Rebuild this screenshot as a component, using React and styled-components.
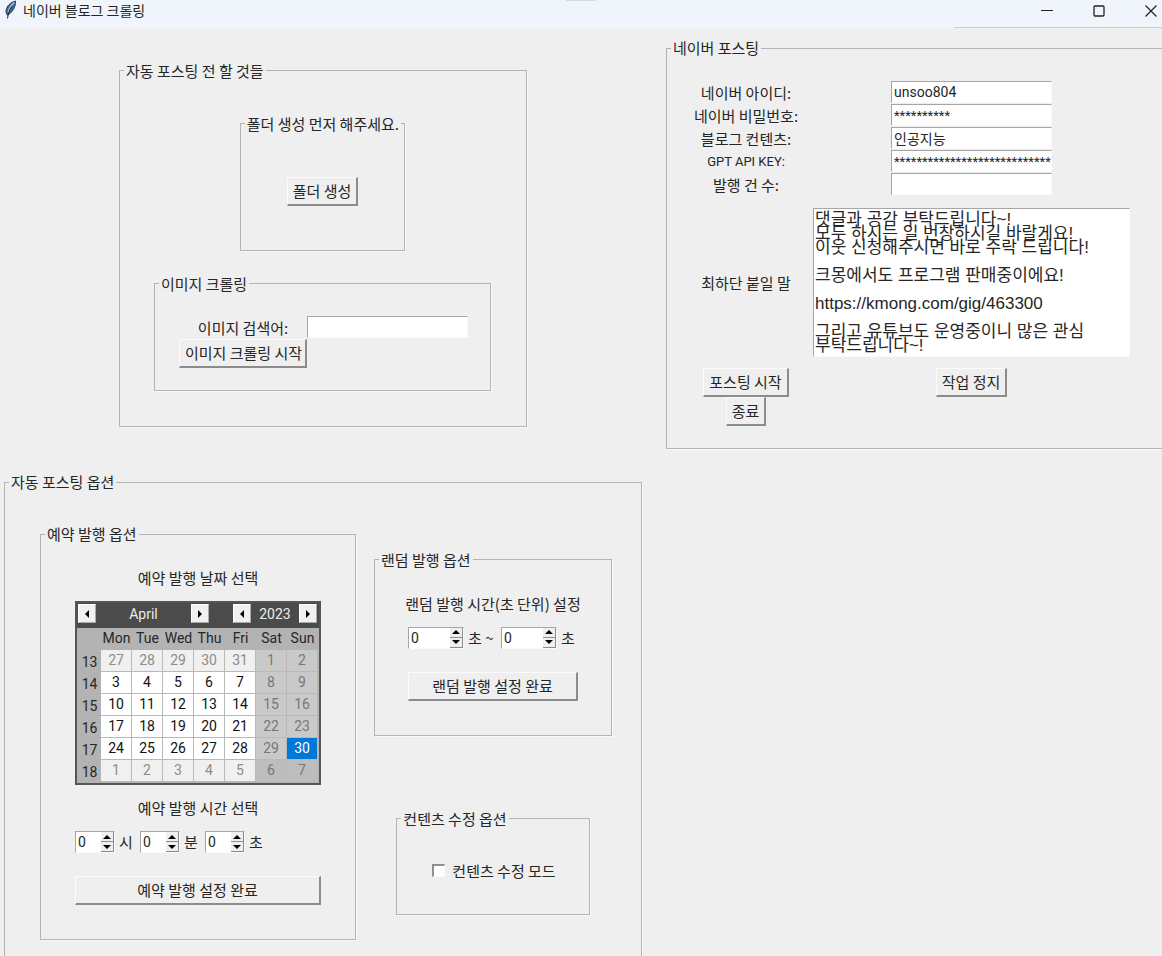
import React from 'react';
import styled, { createGlobalStyle, css } from 'styled-components';

const face = '#efefef';
const line = '#b4b4b4';
const latinFirst = 'Roboto, "Noto Sans CJK KR", sans-serif';

const GlobalStyle = createGlobalStyle`
  *, *::before, *::after { box-sizing: border-box; }
  body {
    margin: 0;
    background: ${face};
    color: #262626;
    font: 15px/24px "Noto Sans CJK KR", sans-serif;
  }
  button, input, textarea { font: inherit; color: inherit; margin: 0; border-radius: 0; }
`;

const Window = styled.div`
  display: flex;
  flex-direction: column;
  height: 100vh;
  overflow: hidden;
`;

const TitleBar = styled.header`
  display: flex;
  align-items: flex-start;
  flex: none;
  height: 28px;
  padding: 0 0 0 4px;
  background:
    linear-gradient(#c9d0d6, #c9d0d6) right bottom / 208px 1px no-repeat,
    linear-gradient(#d5dbe1, #d5dbe1) 50% 0 / 30px 1px no-repeat,
    #eff5fa;
`;

const Title = styled.h1`
  flex: 1;
  margin: 0 0 0 6px;
  font-size: 14px;
  font-weight: 400;
  line-height: 20px;
`;

const WindowControls = styled.div`
  display: flex;
  gap: 30px;
`;

const ControlButton = styled.button`
  display: grid;
  place-items: center;
  width: 22px;
  height: 22px;
  padding: 0;
  border: 0;
  background: none;
`;

const Main = styled.main`
  flex: 1;
  min-height: 0;
  display: grid;
  grid-template-columns: max-content max-content;
  grid-auto-rows: max-content;
  align-items: center;
  justify-items: center;
  gap: 25px 24px;
  padding: 12px 0 24px 4px;
  overflow: auto;
  scrollbar-width: none;
`;

const Frame = styled.fieldset`
  min-width: 0;
  margin: 0;
  padding: 0;
  border: 1px solid ${line};
  box-shadow: 1px 1px 0 #f8f8f8;
`;

const Legend = styled.legend`
  margin-left: 4px;
  padding: 0 2px;
  line-height: 16px;
  white-space: nowrap;
`;

const FrameBody = styled.div`
  padding: ${(p) => p.$pad};
`;

const Stack = styled.div`
  display: flex;
  flex-direction: column;
  align-items: center;
  gap: ${(p) => p.$gap}px;
`;

const Columns = styled.div`
  display: flex;
  align-items: center;
  gap: 18px;
`;

const ImageForm = styled.div`
  display: grid;
  grid-template-columns: 128px 161px;
  grid-template-rows: 23px auto;
  justify-items: center;
`;

const PostForm = styled.div`
  display: grid;
  grid-template-columns: 110px auto;
  grid-template-rows: repeat(5, 23px);
  align-items: center;
  justify-items: center;
`;

const Label = styled.label`
  white-space: nowrap;
  line-height: 23px;
  ${(p) => p.$latin && css`font-family: ${latinFirst}; font-size: 13px;`}
`;

const Caption = styled.p`
  margin: 0;
  line-height: 24px;
  white-space: nowrap;
`;

const sunken = css`
  border: 1px solid #fafafa;
  border-top-color: #a6a6a6;
  border-left-color: #a6a6a6;
  background: #fff;
`;

const Entry = styled.input`
  ${sunken}
  align-self: start;
  width: 161px;
  height: 22px;
  padding: 0 0 0 2px;
  font-family: ${latinFirst};
  font-size: ${(p) => (p.$masked ? 13 : 14)}px;
  line-height: 20px;
  outline: none;
`;

const Message = styled.textarea`
  ${sunken}
  display: block;
  width: 317px;
  height: 149px;
  margin: 12px 12px 11px;
  padding: 4px 1px 0;
  font: 17px/14px "Liberation Sans", "Noto Sans CJK KR", sans-serif;
  resize: none;
  outline: none;
  overflow: hidden;
`;

const PushButton = styled.button`
  width: ${(p) => (p.$fill ? '100%' : 'auto')};
  height: 29px;
  padding: 0 5px;
  border: solid;
  border-width: 1px 2px 2px 1px;
  border-color: #fbfbfb #8c8c8c #8c8c8c #fbfbfb;
  background: ${face};
  line-height: 24px;
  white-space: nowrap;
`;

const SpinRow = styled.div`
  display: flex;
  align-items: center;
  width: 100%;
  height: 22px;
  margin-bottom: 12px;
`;

const SpinBox = styled.span`
  ${sunken}
  display: flex;
  width: ${(p) => p.$width}px;
  height: 22px;
`;

const SpinInput = styled.input`
  flex: 1;
  min-width: 0;
  padding: 0 0 0 2px;
  border: 0;
  background: none;
  font-family: ${latinFirst};
  font-size: 14px;
  outline: none;
  appearance: textfield;
  &::-webkit-inner-spin-button { appearance: none; margin: 0; }
`;

const SpinArrows = styled.span`
  display: flex;
  flex-direction: column;
  width: 13px;
`;

const SpinArrow = styled.button`
  flex: 1;
  display: grid;
  place-items: center;
  padding: 0;
  border: 0;
  border-right: 1px solid #8c8c8c;
  border-bottom: 1px solid #8c8c8c;
  background: ${face};
`;

const Unit = styled.label`
  width: ${(p) => p.$width}px;
  padding-left: 4px;
  white-space: nowrap;
`;

const RandomBody = styled(Stack)`
  width: 174px;
`;

const Inset = styled.div`
  width: 170px;
`;

const CheckLabel = styled.label`
  display: flex;
  align-items: center;
  gap: 7px;
  white-space: nowrap;
`;

const CheckBox = styled.input`
  appearance: none;
  width: 13px;
  height: 13px;
  border: solid;
  border-width: 2px 1px 1px 2px;
  border-color: #8f8f8f #fafafa #fafafa #8f8f8f;
  background: #fff;
`;

const Calendar = styled.section`
  width: 246px;
  padding-bottom: 1px;
  border: 2px solid #555;
  background: #b3b3b3;
  font-family: ${latinFirst};
  font-size: 14px;
`;

const CalendarHead = styled.div`
  display: flex;
  gap: 24px;
  height: 25px;
  padding: 0 2px 4px 1px;
  background: #4b4b4b;
  color: #ececec;
`;

const Stepper = styled.div`
  display: flex;
  flex: ${(p) => (p.$wide ? '1' : '0 0 84px')};
  align-items: center;
  justify-content: space-between;
`;

const StepButton = styled.button`
  display: grid;
  place-items: center;
  width: 18px;
  height: 19px;
  padding: 0;
  border: 1px solid #fff;
  border-right-color: #aaa;
  border-bottom-color: #aaa;
  background: #f0f0f0;
`;

const Days = styled.table`
  width: 241px;
  border-collapse: separate;
  border-spacing: 0;
  table-layout: fixed;
  text-align: center;
  line-height: 20px;
`;

const DayName = styled.th`
  width: ${(p) => (p.$week ? 24 : 31)}px;
  height: 22px;
  padding: 0 0 2px;
  font-weight: 400;
`;

const WeekNumber = styled.th`
  padding: 1px 0 0 1px;
  font-weight: 400;
`;

const tones = {
  day: css`background: #fff; color: #111;`,
  other: css`background: #f0f0f0; color: #8c8c8c;`,
  weekend: css`background: #c9c9c9; color: #777;`,
  otherWeekend: css`background: #bdbdbd; color: #777;`,
  selected: css`background: #0078d7; color: #fff;`,
};

const Day = styled.td`
  height: 22px;
  padding: 0 0 1px;
  border-right: 1px solid #b9b9b9;
  border-bottom: 1px solid #b9b9b9;
  ${(p) => tones[p.$tone]}
`;

const weeks = [
  [13, 27, 28, 29, 30, 31, 1, 2],
  [14, 3, 4, 5, 6, 7, 8, 9],
  [15, 10, 11, 12, 13, 14, 15, 16],
  [16, 17, 18, 19, 20, 21, 22, 23],
  [17, 24, 25, 26, 27, 28, 29, 30],
  [18, 1, 2, 3, 4, 5, 6, 7],
];

const dayTone = (row, col) => {
  if (row === 4 && col === 6) return 'selected';
  if (col > 4) return row === 5 ? 'otherWeekend' : 'weekend';
  if (row === 5 || row === 0) return 'other';
  return 'day';
};

const message = `댓글과 공감 부탁드립니다~!
모두 하시는 일 번창하시길 바랄게요!
이웃 신청해주시면 바로 수락 드립니다!

크몽에서도 프로그램 판매중이에요!

https://kmong.com/gig/463300

그리고 유튜브도 운영중이니 많은 관심
부탁드립니다~!`;

function Group({ title, pad, children }) {
  return (
    <Frame>
      <Legend>{title}</Legend>
      <FrameBody $pad={pad}>{children}</FrameBody>
    </Frame>
  );
}

function Feather() {
  return (
    <svg width="13" height="20" viewBox="0 0 13 20" aria-hidden="true">
      <path d="M11.500 1C7 2 2.400 6 2 10.500c-.1 2 .4 3.500 1.300 4.700C7.500 13.500 12.300 7 11.500 1Z" fill="#3f6695" stroke="#1e2d40" strokeWidth=".8" />
      <path d="M10.500 2.500C7.500 4.500 5 8 4.200 12.500" fill="none" stroke="#a9c6e2" strokeWidth="1.500" />
      <path d="M7.800 6.500C5.500 10 4.200 13.500 3.500 18.500" fill="none" stroke="#1d2530" strokeWidth="1" />
    </svg>
  );
}

function Arrow({ dir }) {
  const left = dir === 'left';
  return (
    <svg width="6" height="8" viewBox="0 0 6 8" aria-hidden="true">
      <path d={left ? 'M5 0V8L1 4Z' : 'M1 0V8L5 4Z'} fill="#000" />
    </svg>
  );
}

function Spin({ id, width, unit, unitWidth = 25 }) {
  return (
    <>
      <SpinBox $width={width}>
        <SpinInput id={id} type="number" defaultValue="0" />
        <SpinArrows>
          <SpinArrow type="button" aria-label="증가">
            <svg width="8" height="4" viewBox="0 0 8 4"><path d="M0 4H8L4 0Z" fill="#000" /></svg>
          </SpinArrow>
          <SpinArrow type="button" aria-label="감소">
            <svg width="8" height="4" viewBox="0 0 8 4"><path d="M0 0H8L4 4Z" fill="#000" /></svg>
          </SpinArrow>
        </SpinArrows>
      </SpinBox>
      <Unit htmlFor={id} $width={unitWidth}>{unit}</Unit>
    </>
  );
}

function MonthCalendar() {
  return (
    <Calendar aria-label="April 2023">
      <CalendarHead>
        <Stepper $wide>
          <StepButton type="button" aria-label="이전 달"><Arrow dir="left" /></StepButton>
          <span>April</span>
          <StepButton type="button" aria-label="다음 달"><Arrow dir="right" /></StepButton>
        </Stepper>
        <Stepper>
          <StepButton type="button" aria-label="이전 해"><Arrow dir="left" /></StepButton>
          <span>2023</span>
          <StepButton type="button" aria-label="다음 해"><Arrow dir="right" /></StepButton>
        </Stepper>
      </CalendarHead>
      <Days>
        <thead>
          <tr>
            <DayName $week />
            {['Mon', 'Tue', 'Wed', 'Thu', 'Fri', 'Sat', 'Sun'].map((d) => (
              <DayName key={d} scope="col">{d}</DayName>
            ))}
          </tr>
        </thead>
        <tbody>
          {weeks.map(([week, ...days], row) => (
            <tr key={week}>
              <WeekNumber scope="row">{week}</WeekNumber>
              {days.map((d, col) => (
                <Day key={col} $tone={dayTone(row, col)}>{d}</Day>
              ))}
            </tr>
          ))}
        </tbody>
      </Days>
    </Calendar>
  );
}

const fields = [
  { id: 'naver-id', label: '네이버 아이디:', value: 'unsoo804' },
  { id: 'naver-pw', label: '네이버 비밀번호:', value: '*'.repeat(10), masked: true },
  { id: 'contents', label: '블로그 컨텐츠:', value: '인공지능' },
  { id: 'gpt-key', label: 'GPT API KEY:', value: '*'.repeat(28), masked: true, latin: true },
  { id: 'count', label: '발행 건 수:', value: '' },
];

export default function App() {
  return (
    <Window>
      <GlobalStyle />
      <TitleBar>
        <Feather />
        <Title>네이버 블로그 크롤링</Title>
        <WindowControls>
          <ControlButton type="button" aria-label="최소화">
            <svg width="12" height="12" viewBox="0 0 12 12"><path d="M0 5.500H12" stroke="#222" /></svg>
          </ControlButton>
          <ControlButton type="button" aria-label="최대화">
            <svg width="12" height="12" viewBox="0 0 12 12"><rect x="1" y="1" width="10" height="10" rx="1" fill="none" stroke="#222" strokeWidth="1.300" /></svg>
          </ControlButton>
          <ControlButton type="button" aria-label="닫기">
            <svg width="12" height="12" viewBox="0 0 12 12"><path d="M.5.5l11 11M11.500.5l-11 11" stroke="#222" strokeWidth="1.200" /></svg>
          </ControlButton>
        </WindowControls>
      </TitleBar>

      <Main>
        <Group title="자동 포스팅 전 할 것들" pad="37px 35px 35px 34px">
          <Stack $gap={25}>
            <Group title="폴더 생성 먼저 해주세요." pad="45px 46px 44px">
              <PushButton type="button">폴더 생성</PushButton>
            </Group>
            <Group title="이미지 크롤링" pad="24px 22px 22px 24px">
              <ImageForm>
                <Label htmlFor="image-query">이미지 검색어:</Label>
                <Entry id="image-query" />
                <PushButton type="button" $fill>이미지 크롤링 시작</PushButton>
              </ImageForm>
            </Group>
          </Stack>
        </Group>

        <Group title="네이버 포스팅" pad="25px 24px 22px">
          <PostForm>
            {fields.map((f) => (
              <React.Fragment key={f.id}>
                <Label htmlFor={f.id} $latin={f.latin}>{f.label}</Label>
                <Entry id={f.id} defaultValue={f.value} $masked={f.masked} />
              </React.Fragment>
            ))}
            <Label htmlFor="footer-text">최하단 붙일 말</Label>
            <Message id="footer-text" defaultValue={message} spellCheck={false} />
            <PushButton type="button">포스팅 시작</PushButton>
            <PushButton type="button">작업 정지</PushButton>
            <PushButton type="button">종료</PushButton>
          </PostForm>
        </Group>

        <Group title="자동 포스팅 옵션" pad="36px 29px 35px 35px">
          <Columns>
            <Group title="예약 발행 옵션" pad="24px 34px 34px">
              <Stack $gap={11}>
                <Caption>예약 발행 날짜 선택</Caption>
                <MonthCalendar />
                <Caption>예약 발행 시간 선택</Caption>
                <SpinRow>
                  <Spin id="hour" width={40} unit="시" />
                  <Spin id="minute" width={40} unit="분" />
                  <Spin id="second" width={40} unit="초" />
                </SpinRow>
                <PushButton type="button" $fill>예약 발행 설정 완료</PushButton>
              </Stack>
            </Group>
            <Stack $gap={75}>
              <Group title="랜덤 발행 옵션" pad="24px 31px 34px">
                <RandomBody $gap={11}>
                  <Caption>랜덤 발행 시간(초 단위) 설정</Caption>
                  <Inset>
                    <SpinRow>
                      <Spin id="random-from" width={56} unit="초 ~" unitWidth={37} />
                      <Spin id="random-to" width={56} unit="초" unitWidth={21} />
                    </SpinRow>
                  </Inset>
                  <Inset>
                    <PushButton type="button" $fill>랜덤 발행 설정 완료</PushButton>
                  </Inset>
                </RandomBody>
              </Group>
              <Group title="컨텐츠 수정 옵션" pad="32px 33px 31px 35px">
                <CheckLabel>
                  <CheckBox type="checkbox" />
                  컨텐츠 수정 모드
                </CheckLabel>
              </Group>
            </Stack>
          </Columns>
        </Group>
      </Main>
    </Window>
  );
}
